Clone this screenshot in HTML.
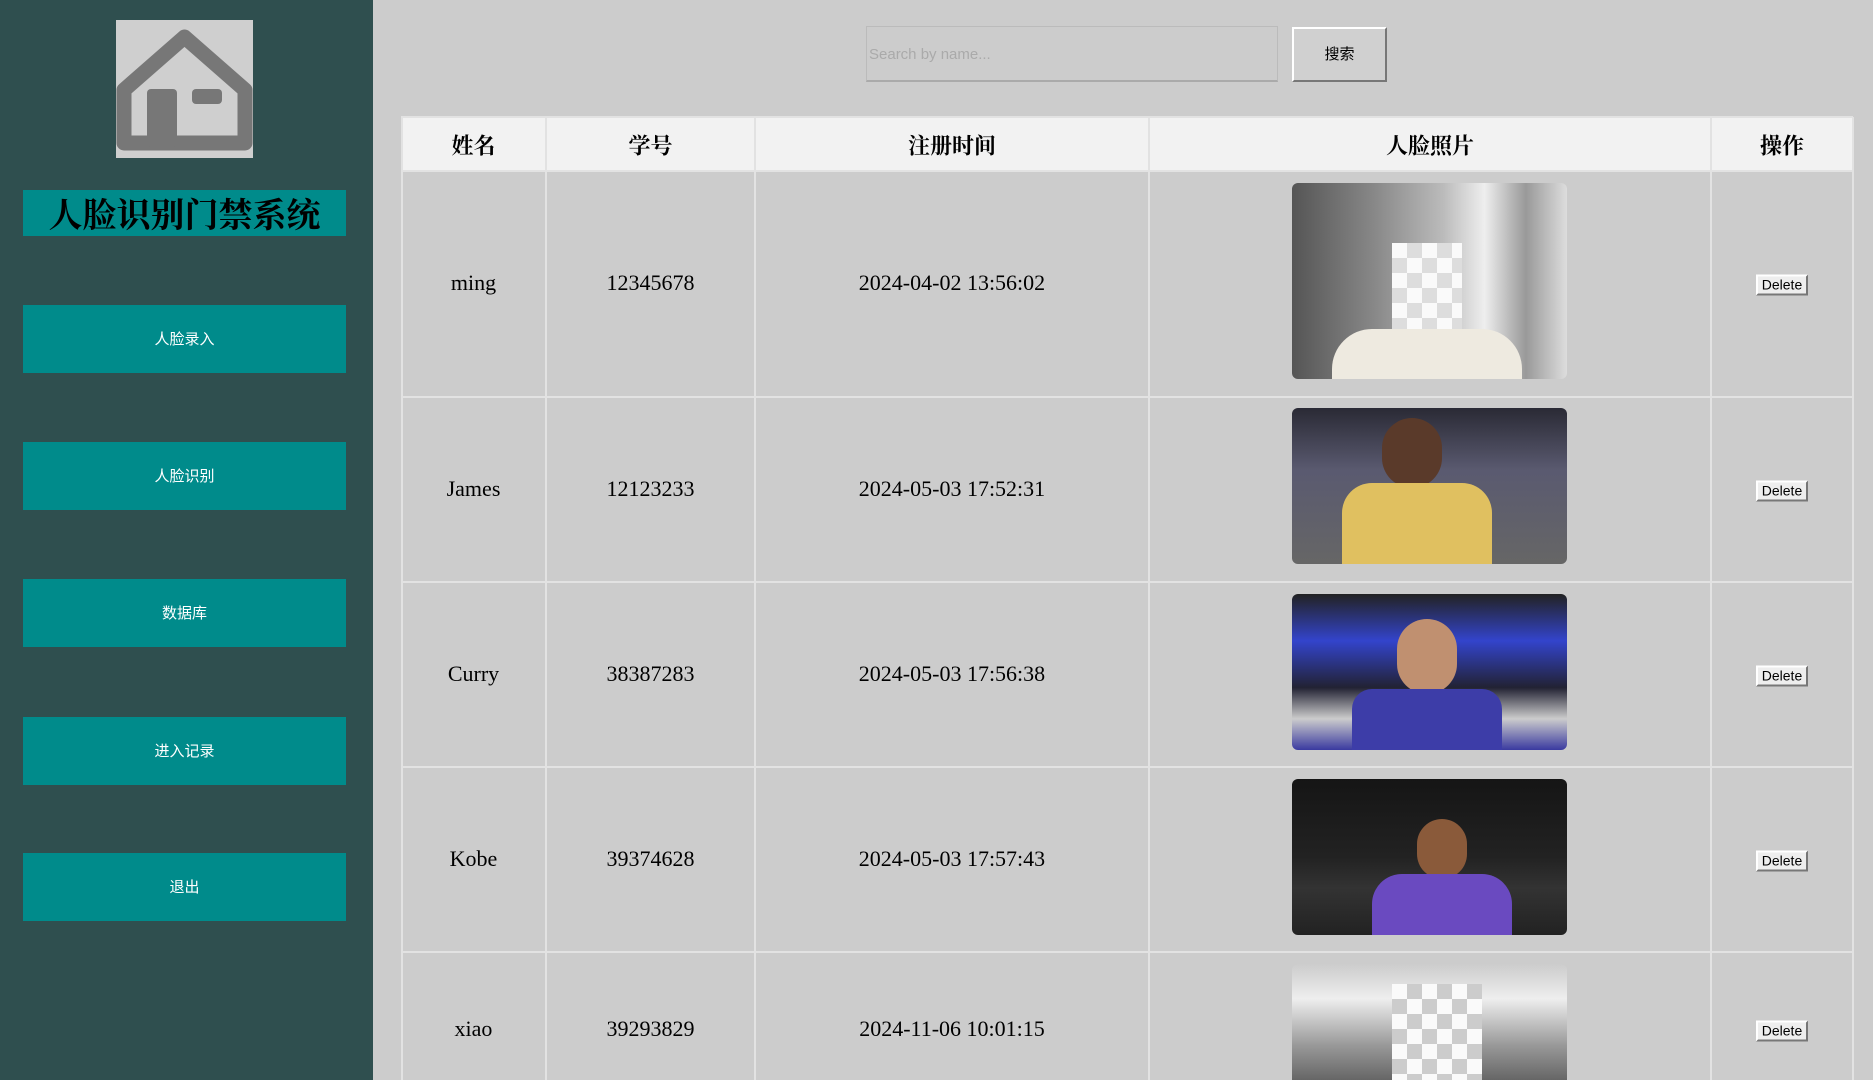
<!DOCTYPE html>
<html><head><meta charset="utf-8"><style>
*{margin:0;padding:0;box-sizing:border-box}
html,body{width:1873px;height:1080px;overflow:hidden}
body{background:#cccccc;position:relative;font-family:"Liberation Serif","Noto Serif CJK SC",serif}
.side{position:absolute;left:0;top:0;width:373px;height:1080px;background:#2f4f4f}
.logo{position:absolute;left:116px;top:20px;width:137px;height:138px;background:#cfcfcf}
.title{position:absolute;left:23px;top:190px;width:323px;height:46px;background:#008b8b;color:#000;font-size:34px;font-weight:bold;text-align:center;line-height:54px;font-family:"Liberation Serif","Noto Serif CJK SC",serif;overflow:hidden}
.btn{position:absolute;left:23px;width:323px;height:68px;background:#008b8b;color:#fff;font-family:"Liberation Sans","Noto Sans CJK SC",sans-serif;font-size:15px;text-align:center;line-height:70px}
.search{position:absolute;left:866px;top:26px;width:412px;height:56px;border:1px solid #bbb;border-bottom:2px solid #aaa;background:#cccccc;font-family:"Liberation Sans",sans-serif;font-size:15px;color:#aaa;line-height:56px;padding-left:2px}
.sbtn{position:absolute;left:1292px;top:27px;width:95px;height:55px;background:#d0d0d0;border:2px solid;border-color:#fff #777 #777 #fff;font-family:"Liberation Sans","Noto Sans CJK SC",sans-serif;font-size:15px;text-align:center;line-height:51px;color:#000}
.hdr{position:absolute;left:401px;top:117px;width:1452px;height:54px;background:#f2f2f2}
.vl{position:absolute;width:2px;background:#e2e2e2;top:117px;height:963px}
.hl{position:absolute;left:401px;width:1452px;height:2px;background:#e2e2e2}
.c{position:absolute;text-align:center;font-size:22px;color:#000;transform:translateY(-50%)}
.h{font-size:22px;font-weight:bold}
.img{position:absolute;left:1292px;width:275px;border-radius:6px;overflow:hidden}
.del{position:absolute;left:1756px;width:52px;height:21px;background:#eee;border:2px solid;border-color:#fff #777 #777 #fff;font-family:"Liberation Sans",sans-serif;font-size:14px;text-align:center;line-height:17px;transform:translateY(-50%)}
</style></head><body>
<div class="side">
 <div class="logo"><svg width="137" height="138" viewBox="0 0 137 138"><path d="M8 70 L68.5 17 L129 70 L129 123 L8 123 Z" fill="none" stroke="#777" stroke-width="15" stroke-linejoin="round"/><rect x="31" y="69" width="30" height="58" rx="4" fill="#777"/><rect x="76" y="69" width="30" height="15" rx="4" fill="#777"/></svg></div>
 <div class="title">人脸识别门禁系统</div>
 <div class="btn" style="top:305px">人脸录入</div>
 <div class="btn" style="top:442px">人脸识别</div>
 <div class="btn" style="top:579px">数据库</div>
 <div class="btn" style="top:717px">进入记录</div>
 <div class="btn" style="top:853px">退出</div>
</div>
<div class="search">Search by name...</div>
<div class="sbtn">搜索</div>
<div class="hdr"></div>
<div class="vl" style="left:401px"></div><div class="vl" style="left:545px"></div><div class="vl" style="left:754px"></div><div class="vl" style="left:1148px"></div><div class="vl" style="left:1710px"></div><div class="vl" style="left:1852px"></div>
<div class="hl" style="top:116px"></div><div class="hl" style="top:170px"></div><div class="hl" style="top:396px"></div><div class="hl" style="top:581px"></div><div class="hl" style="top:766px"></div><div class="hl" style="top:951px"></div>
<div class="c h" style="left:401px;width:145px;top:145px">姓名</div>
<div class="c h" style="left:546px;width:209px;top:145px">学号</div>
<div class="c h" style="left:755px;width:394px;top:145px">注册时间</div>
<div class="c h" style="left:1149px;width:562px;top:145px">人脸照片</div>
<div class="c h" style="left:1711px;width:142px;top:145px">操作</div>

<div class="c" style="left:401px;width:145px;top:283px">ming</div>
<div class="c" style="left:546px;width:209px;top:283px">12345678</div>
<div class="c" style="left:755px;width:394px;top:283px">2024-04-02 13:56:02</div>
<div class="img" style="top:183px;height:196px;background:linear-gradient(90deg,#555 0%,#888 30%,#bbb 55%,#eee 70%,#999 85%,#ddd 100%)"><div style="position:absolute;left:100px;top:60px;width:70px;height:136px;background:repeating-conic-gradient(#ddd 0 25%,#fafafa 0 50%) 0 0/30px 30px"></div><div style="position:absolute;left:40px;bottom:0;width:190px;height:50px;background:#eeeae0;border-radius:40px 40px 0 0"></div></div>
<div class="del" style="top:285px">Delete</div>

<div class="c" style="left:401px;width:145px;top:489px">James</div>
<div class="c" style="left:546px;width:209px;top:489px">12123233</div>
<div class="c" style="left:755px;width:394px;top:489px">2024-05-03 17:52:31</div>
<div class="img" style="top:408px;height:156px;background:linear-gradient(180deg,#2a2a35 0%,#5a5a70 40%,#666 100%)"><div style="position:absolute;left:90px;top:10px;width:60px;height:70px;background:#5a3a2a;border-radius:30px"></div><div style="position:absolute;left:50px;top:75px;width:150px;height:81px;background:#e0c060;border-radius:30px 30px 0 0"></div></div>
<div class="del" style="top:491px">Delete</div>

<div class="c" style="left:401px;width:145px;top:674px">Curry</div>
<div class="c" style="left:546px;width:209px;top:674px">38387283</div>
<div class="c" style="left:755px;width:394px;top:674px">2024-05-03 17:56:38</div>
<div class="img" style="top:594px;height:156px;background:linear-gradient(180deg,#222 0%,#3344cc 30%,#223 60%,#ccc 80%,#3a3aa0 100%)"><div style="position:absolute;left:105px;top:25px;width:60px;height:75px;background:#c09070;border-radius:30px"></div><div style="position:absolute;left:60px;top:95px;width:150px;height:61px;background:#3d3da8;border-radius:20px 20px 0 0"></div></div>
<div class="del" style="top:676px">Delete</div>

<div class="c" style="left:401px;width:145px;top:859px">Kobe</div>
<div class="c" style="left:546px;width:209px;top:859px">39374628</div>
<div class="c" style="left:755px;width:394px;top:859px">2024-05-03 17:57:43</div>
<div class="img" style="top:779px;height:156px;background:linear-gradient(180deg,#151515 0%,#222 50%,#333 70%,#222 100%)"><div style="position:absolute;left:125px;top:40px;width:50px;height:60px;background:#8a5a3a;border-radius:25px"></div><div style="position:absolute;left:80px;top:95px;width:140px;height:61px;background:#6a4ac0;border-radius:30px 30px 0 0"></div></div>
<div class="del" style="top:861px">Delete</div>

<div class="c" style="left:401px;width:145px;top:1029px">xiao</div>
<div class="c" style="left:546px;width:209px;top:1029px">39293829</div>
<div class="c" style="left:755px;width:394px;top:1029px">2024-11-06 10:01:15</div>
<div class="img" style="top:964px;height:116px;border-radius:6px 6px 0 0;background:linear-gradient(180deg,#ccc 0%,#eee 30%,#999 70%,#666 100%)"><div style="position:absolute;left:100px;top:20px;width:90px;height:96px;background:repeating-conic-gradient(#ccc 0 25%,#fafafa 0 50%) 0 0/30px 30px"></div></div>
<div class="del" style="top:1031px">Delete</div>
</body></html>
